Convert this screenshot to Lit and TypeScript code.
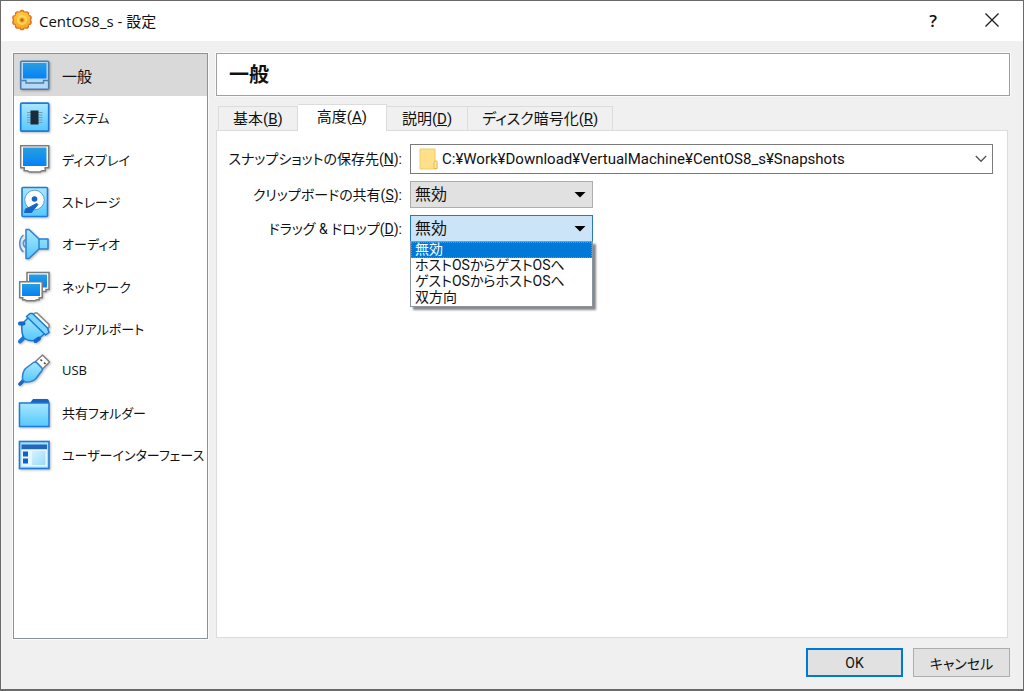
import { LitElement, html, svg, css } from "lit";
import { customElement, state } from "lit/decorators.js";
import { classMap } from "lit/directives/class-map.js";

const icons: Record<string, unknown> = {
  general: svg`
    <rect x="2.700" y="2.200" width="28" height="28" rx="1" fill="#b4d8f7" stroke="#4c7ea8" stroke-width="1.600"/>
    <rect x="5" y="4" width="23.500" height="15.500" fill="url(#screen)"/>
    <path d="M3.500 21.500h4.500v2.500h17.500v-2.500h4.500" fill="none" stroke="#4c7ea8" stroke-width="1.300"/>`,
  system: svg`
    <rect x="2.700" y="2.200" width="28" height="28" rx="1" fill="url(#sky)" stroke="#1f7bd8" stroke-width="1.700"/>
    <path d="M9 11.500h15.500M9 14h15.500M9 16.500h15.500M9 19h15.500M9 21.500h15.500" stroke="#6e9db5" stroke-width="1.100"/>
    <rect x="12.500" y="9.500" width="8" height="14" fill="#1d2a3a"/>`,
  display: svg`
    <path d="M2.700 2.700h28v22h-3.500v3h-3l-2 1.300h-11l-2-1.300h-3v-3h-3.500z" fill="#fff" stroke="#7b7b7b" stroke-width="1.500"/>
    <rect x="5" y="4.500" width="23.500" height="18.500" fill="url(#screen)"/>`,
  storage: svg`
    <rect x="4" y="1.500" width="25.500" height="29" rx="1" fill="url(#sky)" stroke="#1f7bd8" stroke-width="1.600"/>
    <circle cx="16.500" cy="14" r="9.800" fill="#fff" stroke="#5b9fd8"/>
    <circle cx="16.500" cy="13" r="2.800" fill="#1565c8"/>
    <path d="M18.500 17.500l1.500 1-5 6-1.500 2h-7l1-3.500 4.500-2z" fill="#1565c8" stroke="#1565c8" stroke-linejoin="round"/>`,
  audio: svg`
    <path d="M5.500 7c-5 4-5 13 0 17M7.500 11.500c-3 2-3 6 0 8" fill="none" stroke="#4c93d8" stroke-width="1.600"/>
    <path d="M8 1.500h3l10 9.500h9v10h-9l-10 9.500h-3z" fill="url(#sky)" stroke="#2f7fd0" stroke-width="1.500" stroke-linejoin="round"/>
    <path d="M21 11v10" stroke="#2f7fd0" stroke-width="1.500"/>`,
  network: svg`
    <path d="M9 2.500h22v17h-3v2h-3l-1.500 1h-10l-4.500-3z" fill="#fff" stroke="#7b7b7b" stroke-width="1.500"/>
    <rect x="11" y="4.500" width="18" height="13" fill="url(#screen)"/>
    <path d="M1.700 11.700h22.500v16h-3v2h-2.500l-1.500 1h-9l-1.500-1h-2v-2h-3z" fill="#fff" stroke="#7b7b7b" stroke-width="1.500"/>
    <rect x="4" y="14" width="18" height="12" fill="url(#screen)"/>`,
  serial: svg`
    <path d="M14 3.500l3-2.500h2L31 12.500v3l-3 2z" fill="#fff" stroke="#858585" stroke-width="1.400" stroke-linejoin="round"/>
    <path d="M2 29.500l4-4" stroke="#1b78d2" stroke-width="4" stroke-linecap="round"/>
    <path d="M11 5L4 12q-1 9 2 14 5 4 13 2l8.500-7z" fill="url(#sky)" stroke="#1b78d2" stroke-width="1.500" stroke-linejoin="round"/>
    <path d="M8.500 4.500l3.500-3h2.500l15 14.500 1.500 4.500-3.500 2.500z" fill="#7fd6ff" stroke="#1b78d2" stroke-width="1.500" stroke-linejoin="round"/>
    <path d="M2 11.500l3.500 0M17.500 29l3.500-2.500" stroke="#1767c9" stroke-width="4" stroke-linecap="round"/>`,
  usb: svg`
    <path d="M17.500 7.500l7-6.500 7 7-7 7z" fill="#fff" stroke="#7d7d7d" stroke-width="1.400" stroke-linejoin="round"/>
    <path d="M22.500 5.500l1.500 1.500M26 8.500l1.500 1.500" stroke="#444" stroke-width="1.600"/>
    <path d="M2 30l4-4" stroke="#1767c9" stroke-width="3.600" stroke-linecap="round"/>
    <path d="M15.500 8.500q2-1 3.500.5l4.500 4.500q1.500 1.500.5 3l-6 8q-4 4-11 3.500l-2.500-2.500q-.5-7 3-11z" fill="url(#sky)" stroke="#2f7fd0" stroke-width="1.500" stroke-linejoin="round"/>`,
  folder: svg`
    <path d="M12 6l3-4h14.500l1.500 1.500v5h-19z" fill="#1c63bd"/>
    <rect x="1.500" y="6" width="29.500" height="23.500" fill="url(#sky)" stroke="#1f7bd8" stroke-width="1.500"/>`,
  ui: svg`
    <rect x="1.500" y="2.500" width="29.500" height="27" fill="#a5e0fc" stroke="#1f7bd8" stroke-width="1.600"/>
    <rect x="3.500" y="5.500" width="25.500" height="4.500" fill="#2367bd"/>
    <rect x="3.500" y="11" width="25.500" height="16.500" fill="#e6f7ff"/>
    <rect x="5" y="12.500" width="5" height="5" fill="#0f5fd0"/>
    <rect x="5" y="19.500" width="5" height="5" fill="#0f5fd0"/>
    <rect x="14" y="12" width="13.500" height="14" fill="url(#pane)"/>`,
};

const teeth = Array.from({ length: 10 }, (_, i) => {
  const angle = ((i + 0.5) * Math.PI) / 5;
  return [11 + 7.4 * Math.cos(angle), 11 + 7.4 * Math.sin(angle)];
});

const categories = [
  ["general", "一般"],
  ["system", "システム"],
  ["display", "ディスプレイ"],
  ["storage", "ストレージ"],
  ["audio", "オーディオ"],
  ["network", "ネットワーク"],
  ["serial", "シリアルポート"],
  ["usb", "USB"],
  ["folder", "共有フォルダー"],
  ["ui", "ユーザーインターフェース"],
];

const tabs = [
  ["基本", "B"],
  ["高度", "A"],
  ["説明", "D"],
  ["ディスク暗号化", "R"],
];

const modes = ["無効", "ホストOSからゲストOSへ", "ゲストOSからホストOSへ", "双方向"];

@customElement("app-root")
export class AppRoot extends LitElement {
  @state() private category = "general";
  @state() private tab = "A";
  @state() private dragMode = modes[0];
  @state() private menuOpen = true;

  static styles = css`
    :host {
      display: block;
      font-family: Roboto, "Noto Sans CJK JP", sans-serif;
      font-size: 15px;
      font-feature-settings: "palt";
      color: #111;
    }
    * { box-sizing: border-box; }
    button, select { font: inherit; font-feature-settings: inherit; color: inherit; margin: 0; border-radius: 0; }
    .window {
      min-height: 100vh;
      display: flex;
      flex-direction: column;
      border: 1px solid #6a6a6a;
      border-bottom-width: 2px;
      background: #f0f0f0;
    }
    .defs { position: absolute; width: 0; height: 0; }
    .titlebar {
      display: flex;
      align-items: center;
      height: 40px;
      padding: 0 8px 2px 10px;
      background: #fff;
      font-family: "Open Sans", "Noto Sans CJK JP", sans-serif;
    }
    .logo { width: 22px; height: 22px; margin-right: 6px; }
    .title { flex: 1; margin: 0; font-size: 15px; font-weight: 400; white-space: nowrap; }
    .caption { width: 72px; height: 36px; padding: 0; border: 0; background: none; font-size: 17px; font-weight: 600; }
    .caption:last-child { width: 46px; }
    .caption svg { display: block; margin: auto; }
    .body {
      flex: 1;
      display: grid;
      grid-template-columns: 195px minmax(0, 1fr);
      column-gap: 8px;
      padding: 12px 13px 0 12px;
    }
    .sidebar { background: #fff; border: 1px solid #8b929c; outline: 1px solid #fafafa; margin-bottom: -1px; }
    .categories {
      display: grid;
      grid-auto-rows: 1fr;
      height: 422px;
      font-family: "Open Sans", "Noto Sans CJK JP", sans-serif;
      font-size: 13px;
    }
    .category {
      display: flex;
      align-items: center;
      gap: 12px;
      width: 100%;
      padding: 0 0 0 4px;
      border: 0;
      background: none;
      white-space: nowrap;
    }
    .category.wide { font-size: 15px; }
    .category.active { background: #d9d9d9; }
    .category svg { width: 32px; height: 32px; flex: none; overflow: visible; filter: drop-shadow(1px 1px 1px #0004); }
    .main { display: flex; flex-direction: column; min-width: 0; }
    .heading {
      height: 43px;
      margin: 0 0 8px;
      padding: 0 12px;
      border: 1px solid #a0a0a0;
      outline: 1px solid #fafafa;
      background: #fff;
      font-size: 20px;
      font-weight: 700;
      line-height: 43px;
    }
    .tabs { display: flex; align-items: flex-end; height: 26px; padding-left: 2px; }
    .tab {
      height: 24px;
      padding: 0 15px;
      border: 1px solid #dcdcdc;
      border-bottom: 0;
      border-left-width: 0;
      background: #f0f0f0;
      line-height: 22px;
      white-space: nowrap;
    }
    .tab:first-child { padding: 0 14px; border-left-width: 1px; }
    .tab:last-child { padding: 0 14px; }
    .tab.active {
      z-index: 1;
      height: 27px;
      margin-bottom: -1px;
      padding: 0 19px 2px;
      background: #fff;
    }
    .panel {
      flex: 1;
      margin-right: 2px;
      padding: 13px 14px;
      border: 1px solid #dcdcdc;
      background: #fff;
    }
    .form {
      display: grid;
      grid-template-columns: 171px minmax(0, 1fr);
      column-gap: 8px;
      row-gap: 7px;
      align-items: center;
    }
    .form label { justify-self: end; padding-bottom: 2px; font-size: 14px; white-space: nowrap; }
    .path {
      display: flex;
      align-items: center;
      height: 30px;
      padding: 0 5px 0 8px;
      border: 1px solid #7a7a7a;
    }
    .path select { flex: 1; min-width: 0; height: 28px; padding: 0 4px 1px; border: 0; background: none; appearance: none; }
    .combo { position: relative; width: 183px; }
    .combo > select {
      display: block;
      width: 100%;
      height: 27px;
      padding: 0 4px 1px;
      border: 1px solid #adadad;
      background: #e1e1e1;
      font-size: 16px;
      appearance: none;
    }
    .combo.open > select { border-color: #2a77bd; background: #cce4f7; }
    .combo > svg { position: absolute; right: 7px; top: 10px; pointer-events: none; }
    .menu {
      position: absolute;
      top: 100%;
      left: 0;
      width: 100%;
      margin: -1px 0 0;
      padding: 0;
      border: 1px solid #8a95a3;
      background: #fff;
      box-shadow: 3px 3px 2px #0007;
      font-size: 14px;
      list-style: none;
    }
    .menu li { height: 16px; padding: 0 4px; line-height: 14px; white-space: nowrap; }
    .menu li.chosen { background: #0078d7; color: #fff; outline: 1px dotted #c08040; outline-offset: -1px; }
    .footer { display: flex; justify-content: flex-end; gap: 10px; padding: 10px 13px 12px; }
    .action { width: 97px; height: 29px; padding: 0; border: 1px solid #adadad; background: #e1e1e1; font-size: 14px; white-space: nowrap; }
    .action.primary { border: 2px solid #0078d7; }
  `;

  private arrow() {
    return html`<svg width="12" height="7" viewBox="0 0 12 7" aria-hidden="true"><path d="M.5 1h11l-5.500 5.500z" fill="#000"/></svg>`;
  }

  render() {
    return html`
      <div class="window">
        <svg class="defs" aria-hidden="true">
          <defs>
            <linearGradient id="screen" x2="0" y2="1"><stop stop-color="#279fdf"/><stop offset="1" stop-color="#0680fa"/></linearGradient>
            <linearGradient id="sky" x2="0" y2="1"><stop stop-color="#a8e8ff"/><stop offset="1" stop-color="#55c8fd"/></linearGradient>
            <linearGradient id="pane" x2="1" y2="1"><stop stop-color="#d5f2fe"/><stop offset="1" stop-color="#9adcf7"/></linearGradient>
            <linearGradient id="gear" x2="0" y2="1"><stop stop-color="#ffc93c"/><stop offset="1" stop-color="#fba526"/></linearGradient>
          </defs>
        </svg>
        <header class="titlebar">
          <svg class="logo" viewBox="0 0 22 22" aria-hidden="true">
            ${teeth.map(([x, y]) => svg`<circle cx=${x} cy=${y} r="2.100" fill="#fbb02c" stroke="#df7020" stroke-width="1.400"/>`)}
            <circle cx="11" cy="11" r="8" fill="url(#gear)"/>
            <circle cx="11" cy="11" r="4" fill="none" stroke="#ffd95c" stroke-width="2"/>
            <circle cx="11" cy="11" r="1.700" fill="#b9661c"/>
          </svg>
          <h1 class="title">CentOS8_s - 設定</h1>
          <button class="caption" aria-label="ヘルプ">?</button>
          <button class="caption" aria-label="閉じる">
            <svg width="14" height="14" viewBox="0 0 14 14"><path d="M.5.5l13 13M13.500.5l-13 13" stroke="#222" stroke-width="1.400"/></svg>
          </button>
        </header>
        <div class="body">
          <nav class="sidebar">
            <div class="categories">
              ${categories.map(([id, name]) => html`
                <button class=${classMap({ category: true, wide: name.length < 3, active: this.category === id })} @click=${() => (this.category = id)}>
                  <svg viewBox="0 0 32 32" aria-hidden="true">${icons[id]}</svg>
                  <span>${name}</span>
                </button>`)}
            </div>
          </nav>
          <main class="main">
            <h2 class="heading">${categories.find(([id]) => id === this.category)![1]}</h2>
            <div class="tabs" role="tablist">
              ${tabs.map(([name, key]) => html`
                <button role="tab" aria-selected=${this.tab === key} class=${classMap({ tab: true, active: this.tab === key })} @click=${() => (this.tab = key)}>${name}(<u>${key}</u>)</button>`)}
            </div>
            <section class="panel">
              <div class="form">
                <label for="snapshots">スナップショットの保存先(<u>N</u>):</label>
                <div class="path">
                  <svg width="19" height="22" viewBox="0 0 19 22" aria-hidden="true">
                    <path d="M1 1h15v12h2v8H1z" fill="#ffe08a" stroke="#f0cc66"/>
                    <path d="M15 20.500v-6q0-1.500 1.500-1.500t1.500 1.500v6z" fill="#ffe9a8" stroke="#e5bb4c"/>
                  </svg>
                  <select id="snapshots"><option>C:¥Work¥Download¥VertualMachine¥CentOS8_s¥Snapshots</option></select>
                  <svg width="12" height="8" viewBox="0 0 12 8" aria-hidden="true"><path d="M.8 1l5.200 5.300L11.200 1" fill="none" stroke="#555" stroke-width="1.300"/></svg>
                </div>
                <label for="clipboard">クリップボードの共有(<u>S</u>):</label>
                <div class="combo">
                  <select id="clipboard">${modes.map((m) => html`<option>${m}</option>`)}</select>
                  ${this.arrow()}
                </div>
                <label for="drag">ドラッグ & ドロップ(<u>D</u>):</label>
                <div class=${classMap({ combo: true, open: this.menuOpen })}>
                  <select id="drag" .value=${this.dragMode} @mousedown=${(e: Event) => { e.preventDefault(); this.menuOpen = !this.menuOpen; }}>
                    ${modes.map((m) => html`<option ?selected=${m === this.dragMode}>${m}</option>`)}
                  </select>
                  ${this.arrow()}
                  ${this.menuOpen ? html`
                    <ul class="menu" role="listbox" aria-label="ドラッグ & ドロップ">
                      ${modes.map((m) => html`<li role="option" aria-selected=${m === this.dragMode} class=${classMap({ chosen: m === this.dragMode })}
                        @click=${() => { this.dragMode = m; this.menuOpen = false; }}>${m}</li>`)}
                    </ul>` : ""}
                </div>
              </div>
            </section>
          </main>
        </div>
        <footer class="footer">
          <button class="action primary">OK</button>
          <button class="action">キャンセル</button>
        </footer>
      </div>`;
  }
}
